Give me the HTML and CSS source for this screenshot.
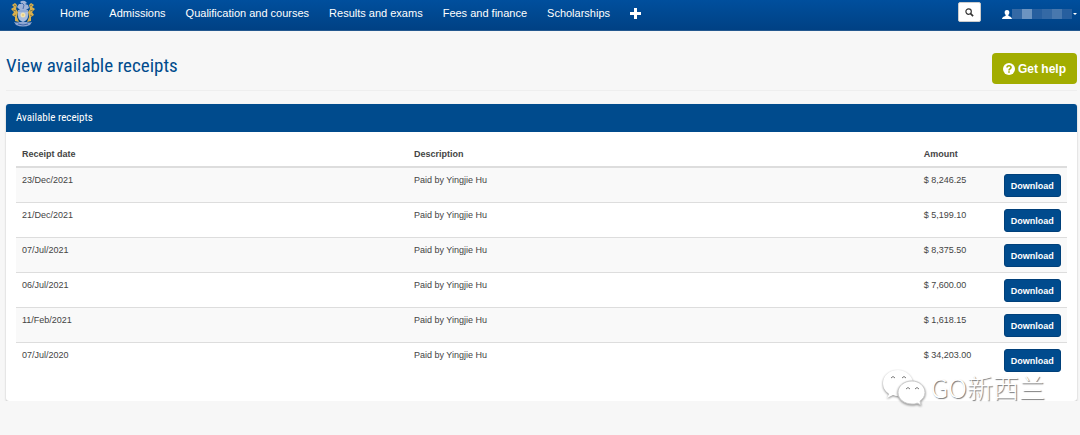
FILE: index.html
```html
<!DOCTYPE html>
<html lang="en">
<head>
  <meta charset="UTF-8" />
  <meta name="viewport" content="width=device-width, initial-scale=1.0">
  <title>View available receipts</title>
  <link rel="stylesheet" href="styles.css">
</head>
<body>

  <header class="navbar">
    <a class="logo" href="#" aria-label="Home page">
      <svg width="26" height="27" viewBox="0 0 26 27">
        <path d="M5 3 L2 5 L4 7 L1 9 L4 12 L2 15 L5 17 L5 21 L9 22 L7 17 L8 12 L6 9 L7 5Z" fill="#d9b04c"/>
        <path d="M21 3 L24 5 L22 7 L25 9 L22 12 L24 15 L21 17 L21 21 L17 22 L19 17 L18 12 L20 9 L19 5Z" fill="#d9b04c"/>
        <path d="M4 5 L6 6 M3 10 L6 11 M4 16 L6 15 M22 5 L20 6 M23 10 L20 11 M22 16 L20 15" stroke="#7d7650" stroke-width="1"/>
        <path d="M10 2 Q12 0 15 1 L17 3 L15 4 L18 5 L19 8 L16 10 L10 10 L7 7 L9 4 L12 4Z" fill="#9fb4d8"/>
        <path d="M12 3 L14 5 L13 9" stroke="#4c6fae" fill="none"/>
        <path d="M8 10 H18 V16 Q18 20 13 22 Q8 20 8 16Z" fill="#a9bddf"/>
        <path d="M8 10 H18 V12 H8Z" fill="#8fa9d4"/>
        <circle cx="13" cy="15" r="2.500" fill="#f2e3b0"/>
        <circle cx="13" cy="15" r="1" fill="#e6c878"/>
        <path d="M4 22 Q8 23 9 22 L17 22 Q18 23 22 22 L20 25 Q13 28 6 25Z" fill="#8fa6d2"/>
        <path d="M8 24 Q13 26 18 24" stroke="#3f65a8" fill="none"/>
      </svg>
    </a>
    <nav class="menu">
      <a href="#">Home</a>
      <a href="#">Admissions</a>
      <a href="#">Qualification and courses</a>
      <a href="#">Results and exams</a>
      <a href="#">Fees and finance</a>
      <a href="#">Scholarships</a>
      <a href="#" aria-label="More">
        <svg width="11" height="11" viewBox="0 0 11 11"><path d="M4 0h3v4h4v3H7v4H4V7H0V4h4z" fill="#fff"/></svg>
      </a>
    </nav>
    <div class="tools">
      <button class="search" type="button" aria-label="Search">
        <svg width="9" height="9" viewBox="0 0 10 10"><circle cx="4" cy="4" r="3" fill="none" stroke="#333" stroke-width="1.3"/><path d="M6.2 6.2 L9 9" stroke="#333" stroke-width="1.8"/></svg>
      </button>
      <a class="user" href="#" aria-label="Account">
        <svg width="10" height="9" viewBox="0 0 11 10"><path d="M5.500 0 C7.500 0 8.300 1.500 8.100 3 C8 4.200 7.500 4.800 7 5.300 V6.300 C8 7 11 7.400 11 10 H0 C0 7.400 3 7 4 6.300 V5.300 C3.500 4.800 3 4.200 2.900 3 C2.700 1.500 3.500 0 5.500 0Z" fill="#fff"/></svg>
        <span class="mask"><i></i><i></i><i></i><i></i><i></i><i></i></span>
        <span class="caret"></span>
      </a>
    </div>
  </header>

  <main class="page">
    <div class="page-header">
      <h1>View available receipts</h1>
      <button class="help" type="button">
        <svg width="12" height="12" viewBox="0 0 12 12"><circle cx="6" cy="6" r="6" fill="#fff"/><path d="M4 4.600 C4 2.200 8 2.200 8 4.500 C8 6 6 5.800 6 7.500" fill="none" stroke="#a2ad00" stroke-width="1.600"/><path d="M5.200 8.300h1.600v1.500H5.200z" fill="#a2ad00"/></svg>
        Get help
      </button>
    </div>

    <section class="panel">
      <h2>Available receipts</h2>
      <div class="panel-body">
        <table>
          <thead>
            <tr><th class="date">Receipt date</th><th class="desc">Description</th><th class="amount">Amount</th><th></th></tr>
          </thead>
          <tbody>
            <tr><td>23/Dec/2021</td><td>Paid by Yingjie Hu</td><td>$ 8,246.25</td><td><button class="download" type="button">Download</button></td></tr>
            <tr><td>21/Dec/2021</td><td>Paid by Yingjie Hu</td><td>$ 5,199.10</td><td><button class="download" type="button">Download</button></td></tr>
            <tr><td>07/Jul/2021</td><td>Paid by Yingjie Hu</td><td>$ 8,375.50</td><td><button class="download" type="button">Download</button></td></tr>
            <tr><td>06/Jul/2021</td><td>Paid by Yingjie Hu</td><td>$ 7,600.00</td><td><button class="download" type="button">Download</button></td></tr>
            <tr><td>11/Feb/2021</td><td>Paid by Yingjie Hu</td><td>$ 1,618.15</td><td><button class="download" type="button">Download</button></td></tr>
            <tr><td>07/Jul/2020</td><td>Paid by Yingjie Hu</td><td>$ 34,203.00</td><td><button class="download" type="button">Download</button></td></tr>
          </tbody>
        </table>
      </div>
    </section>
  </main>

  <div class="watermark">
    <svg width="44" height="38" viewBox="0 0 44 38">
      <g class="bubble" fill="#fff">
        <path d="M16 2 C7 2 1 8 1 15 C1 20 3 23 7 26 L5 30 L11 27 C13 28 15 28 17 28 L31 14 C30 7 23 2 16 2Z"/>
        <path d="M9 10q2-3 4 0M20 10q2-3 4 0" fill="none" stroke="#777"/>
      </g>
      <g class="bubble" fill="#fff">
        <path d="M30 13 C22 13 16 18 16 24.500 C16 31 22 36 30 36 C32 36 34 36 35 35 L39 37 L38 33 C41 31 43 28 43 24.500 C43 18 37 13 30 13Z" stroke="#ccc" stroke-width="1"/>
        <path d="M24 21q2-3 4 0M33 21q2-3 4 0" fill="none" stroke="#777"/>
      </g>
    </svg>
    <span>GO新西兰</span>
  </div>

</body>
</html>
```
FILE: styles.css
```css
* {
  box-sizing: border-box;
}

body {
  margin: 0;
  background: #f7f7f7;
  color: #444;
  font-family: "Liberation Sans", Arial, sans-serif;
  font-size: 9px;
}

button {
  font-family: inherit;
  cursor: pointer;
}

svg {
  display: block;
  overflow: visible;
}

/* top bar */
.navbar {
  display: flex;
  align-items: flex-start;
  height: 31px;
  padding: 0 3px 0 10px;
  background: linear-gradient(#004f9d, #004184);
  border-bottom: 1px solid #24588f;
}

.logo {
  margin-right: 14px;
}

.menu {
  display: flex;
  align-items: center;
  height: 26px;
}

.menu a {
  padding: 0 10px;
  color: #fff;
  font-size: 11px;
  text-decoration: none;
}

.tools {
  display: flex;
  align-items: flex-start;
  gap: 21px;
  margin-left: auto;
  padding-top: 2px;
}

.search {
  display: flex;
  align-items: center;
  justify-content: center;
  width: 23px;
  height: 20px;
  padding: 0;
  background: #fff;
  border: 1px solid #ccc;
  border-radius: 2px;
}

.user {
  display: flex;
  align-items: center;
  height: 24px;
}

.mask {
  display: flex;
  height: 10px;
}

.mask i {
  width: 10px;
  background: #3469a5;
}

.mask i:nth-child(2) {
  background: #6c94c1;
}

.mask i:nth-child(3),
.mask i:nth-child(6) {
  background: #275f9f;
}

.mask i:nth-child(5) {
  background: #4878ae;
}

.caret {
  margin-left: 1px;
  border: 2px solid transparent;
  border-top-color: #fff;
  border-bottom: 0;
}

/* title row */
.page {
  padding: 0 3px 0 6px;
}

.page-header {
  display: flex;
  justify-content: space-between;
  align-items: flex-start;
  height: 60px;
  margin-bottom: 13px;
  padding-top: 22px;
  border-bottom: 1px solid #eee;
}

h1 {
  margin: 0;
  color: #004b8d;
  font-family: "Roboto Condensed", "Arial Narrow", Roboto, sans-serif;
  font-size: 19px;
  font-weight: normal;
  line-height: 26px;
}

.help {
  display: flex;
  align-items: center;
  gap: 3px;
  height: 31px;
  padding: 0 11px;
  background: #a2ad00;
  border: 0;
  border-radius: 4px;
  color: #fff;
  font-size: 12px;
  font-weight: bold;
}

/* receipts */
.panel {
  background: #fff;
  border-radius: 3px;
  box-shadow: 0 1px 2px rgba(0, 0, 0, 0.25);
}

.panel h2 {
  margin: 0;
  padding: 0 10px;
  background: #004b8d;
  border-radius: 3px 3px 0 0;
  color: #fff;
  font-family: "Roboto Condensed", "Arial Narrow", Roboto, sans-serif;
  font-size: 11px;
  font-weight: normal;
  line-height: 28px;
}

.panel-body {
  padding: 10px 10px 23px;
}

table {
  width: 100%;
  border-collapse: separate;
  border-spacing: 0;
  table-layout: fixed;
}

th,
td {
  padding: 6px 6px 5px;
  text-align: left;
  vertical-align: top;
  line-height: 13px;
}

th {
  height: 26px;
  border-bottom: 2px solid #ddd;
}

td {
  height: 35px;
  border-bottom: 1px solid #ddd;
}

tr:last-child td {
  border-bottom: 0;
}

tbody tr:nth-child(odd) {
  background: #f9f9f9;
}

.date {
  width: 37.3%;
}

.desc {
  width: 48.5%;
}

.amount {
  width: 7.6%;
}

.download {
  display: block;
  width: 100%;
  height: 23px;
  padding: 0;
  background: #004b8d;
  border: 1px solid #00407a;
  border-radius: 3px;
  color: #fff;
  font-size: 9px;
  font-weight: bold;
}

/* stamp over the lower right corner */
.watermark {
  position: absolute;
  right: 35px;
  bottom: 29px;
  display: flex;
  align-items: center;
  gap: 5px;
  color: #fff;
  font-family: "Noto Sans CJK SC", sans-serif;
  font-size: 26px;
  font-weight: 300;
  line-height: 38px;
  text-shadow: 1px 1px 1px #777;
}

.bubble {
  filter: drop-shadow(0 1px 1px #888);
}
```
